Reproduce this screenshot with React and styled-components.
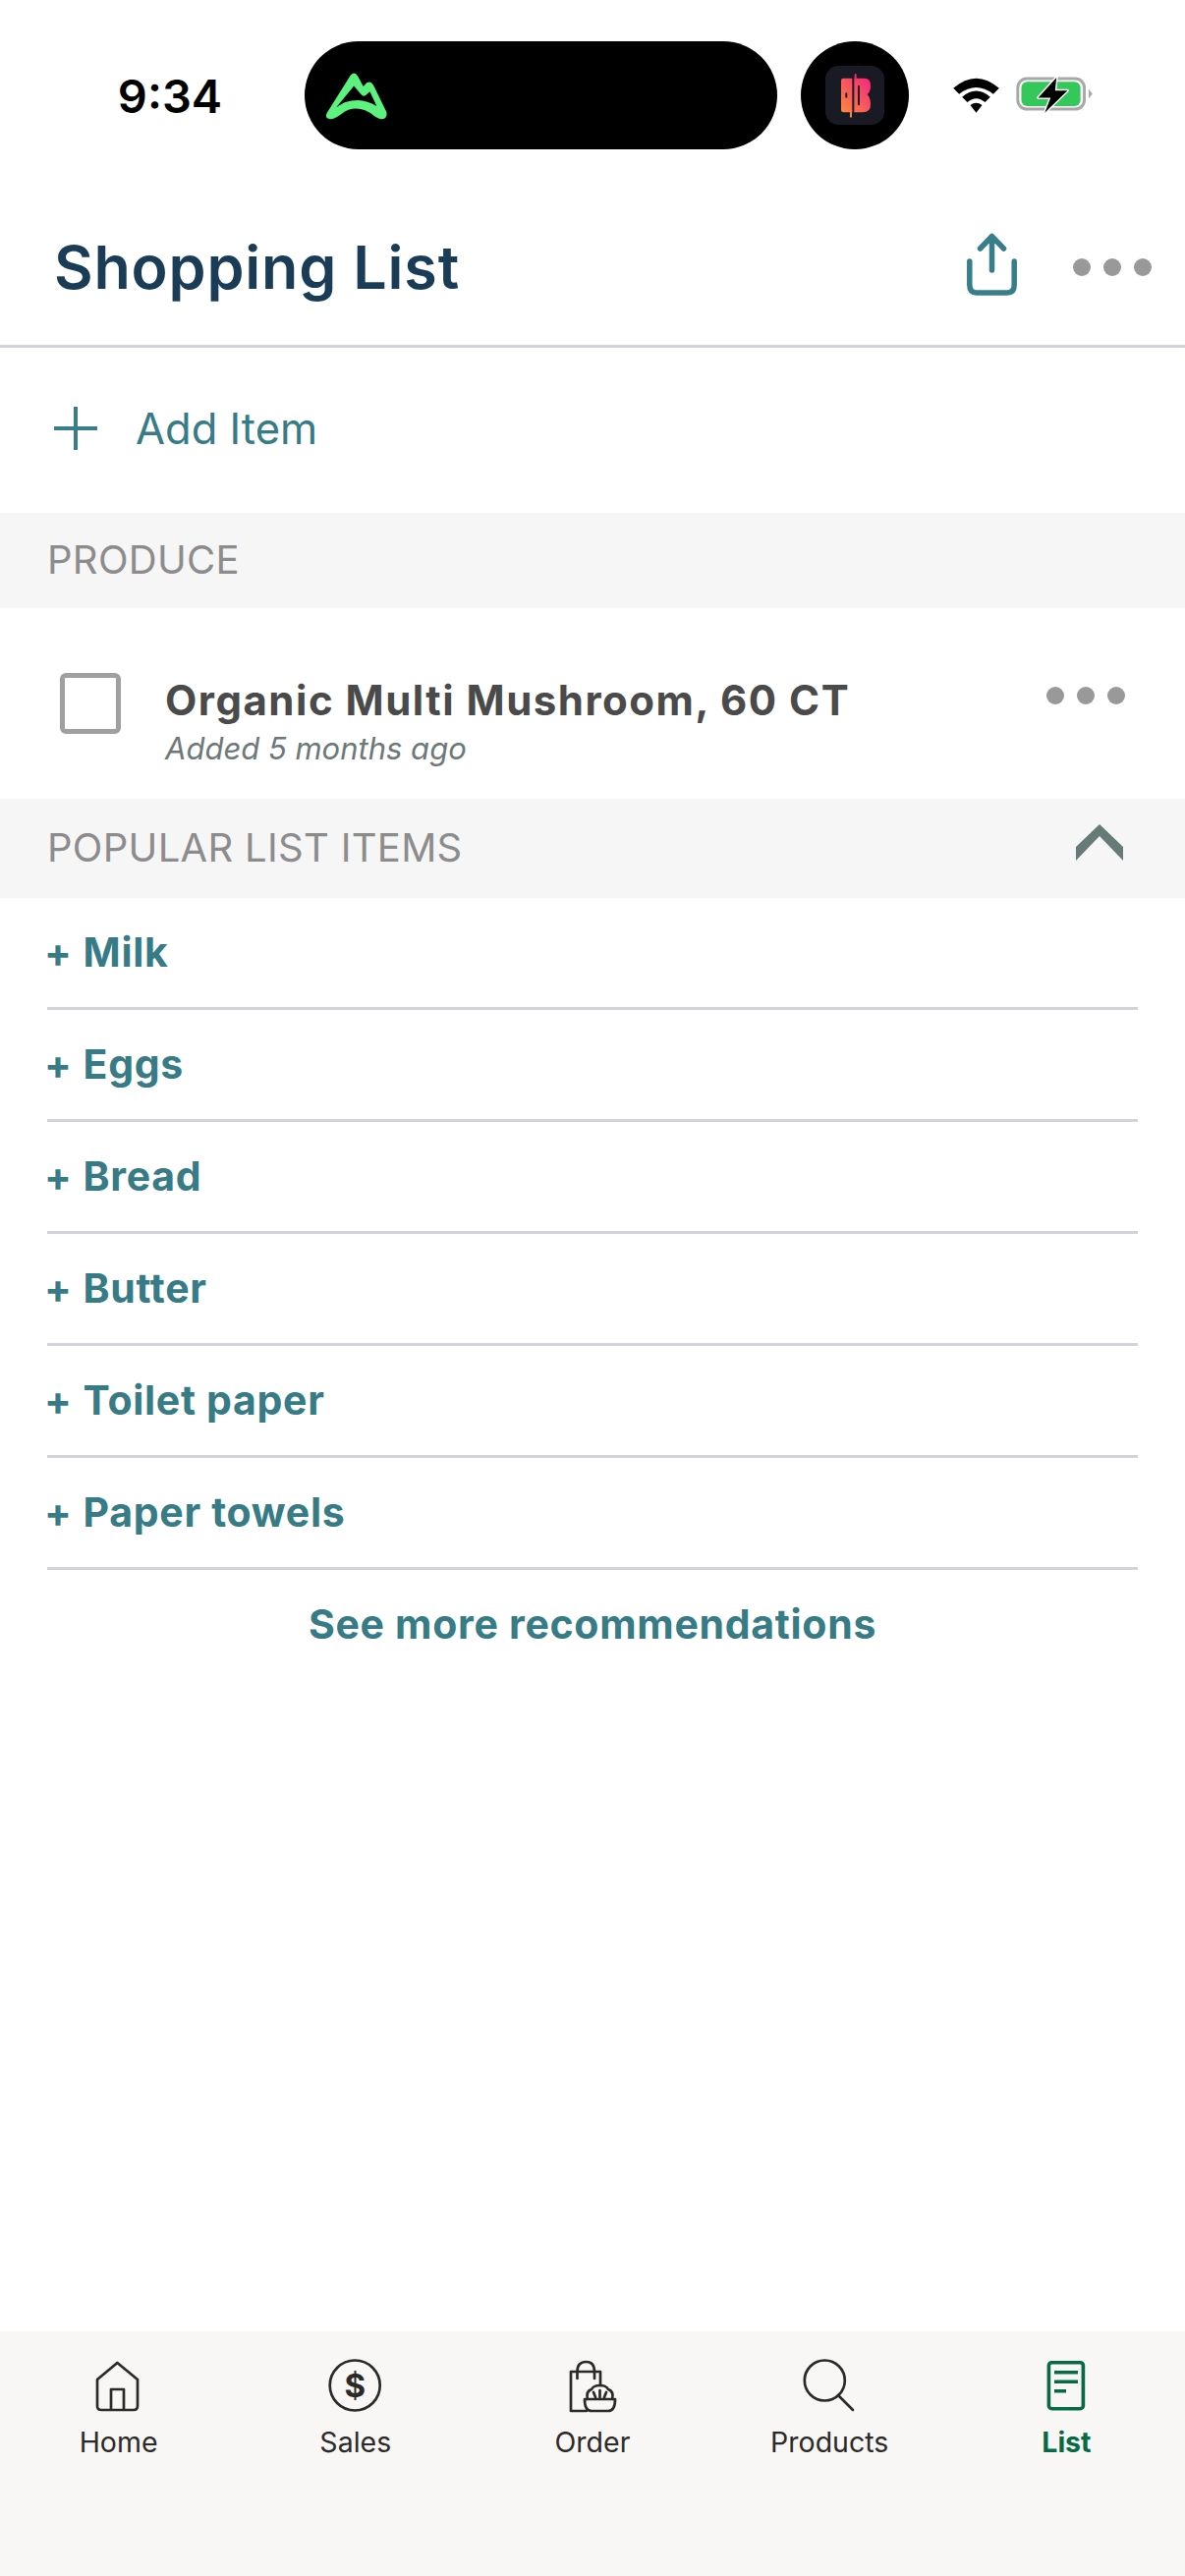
import React from "react";
import styled, { createGlobalStyle } from "styled-components";

const Global = createGlobalStyle`
  html, body { margin: 0; padding: 0; background: #fff; }
  * { box-sizing: border-box; }
`;
const Page = styled.div`
  width: 1206px; height: 2622px; display: flex; flex-direction: column;
  font-family: Inter, "Noto Sans", sans-serif; background: #fff; overflow: hidden;
`;
const StatusBar = styled.div`
  height: 192px; padding-top: 42px; display: flex; align-items: flex-start; flex: none;
`;
const Time = styled.div`
  width: 310px; height: 110px; display: flex; align-items: center; justify-content: center;
  padding-left: 36px; font: 600 47px Inter, sans-serif; color: #000;
`;
const Island = styled.div`
  width: 481px; height: 110px; border-radius: 55px; background: #000;
  display: flex; align-items: center; padding-left: 21px;
`;
const Dot = styled.div`
  width: 110px; height: 110px; border-radius: 50%; background: #000; margin-left: 24px;
  display: flex; align-items: center; justify-content: center;
`;
const Glyphs = styled.div`
  height: 110px; display: flex; align-items: center; margin-left: 45px; gap: 17px;
`;
const Header = styled.header`
  height: 162px; flex: none; border-bottom: 3px solid #d3d1da; display: flex; align-items: center;
  padding: 0 34px 0 55px;
`;
const Title = styled.h1`
  margin: 0; flex: 1; font: 600 61px Inter, sans-serif; color: #1a3c57; letter-spacing: 0.8px;
`;
const HeaderActions = styled.div`
  display: flex; align-items: center; gap: 57px;
`;
const ShareIcon = styled.svg`
  margin-bottom: 6px; display: block;
`;
const Dots = styled.div`
  display: flex; gap: 13px;
  i { width: 18px; height: 18px; border-radius: 50%; background: #999; display: block; }
`;
const AddRow = styled.div`
  height: 168px; flex: none; display: flex; align-items: center; padding: 0 0 4px 55px; gap: 39px;
  font: 400 43.5px Inter, sans-serif; color: #367b85;
`;
const Section = styled.div`
  height: ${p => p.$h}px; flex: none; background: #f6f6f6; display: flex; align-items: center; justify-content: space-between;
  padding: 0 63px 3px 48px; font: 400 40px Inter, sans-serif; color: #8c8c8c; letter-spacing: 0.3px;
`;
const Chevron = styled.svg`
  margin-bottom: 10px; display: block;
`;
const Item = styled.div`
  height: 194px; flex: none; display: flex; padding: 0 61px; align-items: flex-start;
`;
const Check = styled.div`
  width: 62px; height: 62px; margin-top: 66px; border: 5px solid #a0a0a0; border-radius: 6px; flex: none;
`;
const ItemText = styled.div`
  flex: 1; padding: 69px 0 0 45px;
`;
const ItemName = styled.div`
  font: 700 42px/50px Inter, sans-serif; color: #4a4a4a; letter-spacing: 1.5px; white-space: nowrap;
`;
const ItemSub = styled.div`
  font: italic 400 31px/40px Inter, sans-serif; color: #6d7878; margin-top: 4px;
`;
const ItemDots = styled(Dots)`
  margin-top: 80px;
`;
const Popular = styled.div`
  padding: 0 48px; flex: none;
`;
const PopularRow = styled.div`
  height: 114px; border-bottom: 3px solid #d3d1da; display: flex; align-items: center; padding-bottom: 2px;
  font: 700 41px Inter, sans-serif; color: #367b85; white-space: pre; letter-spacing: 0.7px;
`;
const Plus = styled.span`
  margin: 0 11px 0 -3px;
`;
const SeeMore = styled.div`
  height: 114px; display: flex; align-items: center; justify-content: center; padding-bottom: 4px;
  font: 700 41px Inter, sans-serif; color: #367b85; letter-spacing: 0.7px;
`;
const Spacer = styled.div` flex: 1; `;
const TabBar = styled.nav`
  height: 249px; flex: none; background: #f8f7f5; display: grid; grid-template-columns: repeat(5, 1fr);
  padding: 28px 0 0 0; align-items: start;
`;
const Tab = styled.div`
  display: flex; flex-direction: column; align-items: center; gap: 11px;
  font: ${p => (p.$active ? 700 : 400)} 28.5px/36px Inter, sans-serif;
  color: ${p => (p.$active ? "#066a46" : "#2b2a28")};
`;

const TabIcon = ({ children, stroke = "#2b2a28", strokeWidth = 2.7 }) => (
  <svg fill="none" stroke={stroke} strokeWidth={strokeWidth} strokeLinecap="round" strokeLinejoin="round" width="60" height="56" viewBox="0 0 60 56">{children}</svg>
);

const items = ["Milk", "Eggs", "Bread", "Butter", "Toilet paper", "Paper towels"];

export default function App() {
  return (
    <Page>
      <Global />
      <StatusBar>
        <Time>9:34</Time>
        <Island>
          <svg width="63" height="49" viewBox="90 127 190 147">
            <path fillRule="evenodd" fill="#5df27e" d="M96 252 L168 137 Q180 124 190 140 L207 172 L218 160 Q230 154 238 168 L278 250 Q282 272 262 272 Q256 272 240 262 Q212 240 185 240 Q160 240 140 256 Q118 272 106 272 Q86 270 96 252 Z M124 236 Q145 222 152 220 Q170 214 190 214 Q220 216 248 232 L227 188 L213 200 Q205 203 200 196 L178 170 Z" />
          </svg>
        </Island>
        <Dot>
          <svg width="60" height="60" viewBox="120 110 180 180">
            <defs>
              <linearGradient id="bk" x1="1" y1="0" x2="0" y2="1">
                <stop offset="0" stopColor="#f7247d" />
                <stop offset="1" stopColor="#fa8a3f" />
              </linearGradient>
            </defs>
            <rect x="120" y="110" width="180" height="180" rx="40" fill="#1a1a24" />
            <path d="M175 148 H240 Q258 148 258 170 Q258 190 248 197 Q258 207 258 228 Q258 252 235 252 H175 Q168 252 168 245 V155 Q168 148 175 148 Z" fill="url(#bk)" />
            <path d="M205 140 V258 M222 172 V228 M184 195 V205" stroke="#1a1a24" strokeWidth="6" strokeLinecap="round" fill="none" />
            <path d="M212 137 V150 M198 252 V265" stroke="url(#bk)" strokeWidth="6" strokeLinecap="round" fill="none" />
          </svg>
        </Dot>
        <Glyphs>
          <svg width="47" height="36" viewBox="510 148 140 108">
            <path fill="#000" d="M510 180 Q580 120 650 180 L632 198 Q580 158 528 198 Z M537 207 Q580 170 623 207 L607 223 Q580 200 553 223 Z M562 232 Q580 218 598 232 L580 255 Z" />
          </svg>
          <svg width="78" height="38" viewBox="702 147 235 115">
            <rect x="707" y="153" width="205" height="94" rx="28" fill="none" stroke="#a8a8a8" strokeWidth="9" />
            <rect x="718" y="163" width="182" height="75" rx="18" fill="#34c759" />
            <path d="M925 185 L937 200 L925 215 Z" fill="#a8a8a8" />
            <path d="M826 150 L770 212 H808 L790 258 L860 190 H822 Z" fill="#000" stroke="#fff" strokeWidth="9" paintOrder="stroke" strokeLinejoin="round" />
          </svg>
        </Glyphs>
      </StatusBar>
      <Header>
        <Title>Shopping List</Title>
        <HeaderActions>
          <ShareIcon width="51" height="64" viewBox="0 0 51 64" fill="none" stroke="#387d8a" strokeWidth="5.5" strokeLinecap="round" strokeLinejoin="round">
            <path d="M2.8 29 V53 Q2.8 61 10 61 H41 Q48.2 61 48.2 53 V29 M25.5 38 V3.5 M13.5 16 L25.5 3.5 L37.5 16" />
          </ShareIcon>
          <Dots><i /><i /><i /></Dots>
        </HeaderActions>
      </Header>
      <AddRow>
        <svg width="44" height="44" viewBox="0 0 44 44" stroke="#387d8a" strokeWidth="4">
          <path d="M22 0 V44 M0 22 H44" />
        </svg>
        Add Item
      </AddRow>
      <Section $h={97}>PRODUCE</Section>
      <Item>
        <Check />
        <ItemText>
          <ItemName>Organic Multi Mushroom, 60 CT</ItemName>
          <ItemSub>Added 5 months ago</ItemSub>
        </ItemText>
        <ItemDots><i /><i /><i /></ItemDots>
      </Item>
      <Section $h={101}>
        POPULAR LIST ITEMS
        <Chevron width="48" height="37" viewBox="0 0 48 37">
          <path d="M24 0 L48 23 V37 L24 12 L0 37 V23 Z" fill="#667b78" />
        </Chevron>
      </Section>
      <Popular>
        {items.map(t => <PopularRow key={t}><Plus>+</Plus>{t}</PopularRow>)}
      </Popular>
      <SeeMore>See more recommendations</SeeMore>
      <Spacer />
      <TabBar>
        <Tab>
          <TabIcon>
            <path d="M28.4 4 L49 21 V48 Q49 52 45 52 H12 Q8 52 8 48 V21 Z M22 52 V31 H35 V52" />
          </TabIcon>
          Home
        </Tab>
        <Tab>
          <TabIcon>
            <circle cx="29.2" cy="27" r="25.5" />
            <text x="29.2" y="39" textAnchor="middle" fontFamily="Inter, sans-serif" fontWeight="700" fontSize="33" fill="#2b2a28" stroke="none">$</text>
          </TabIcon>
          Sales
        </Tab>
        <Tab>
          <TabIcon>
            <path d="M38 27 V13 H8 V53 H24 M14.5 20 V13 Q14.5 3 23.5 3 Q32 3 32 13 V20" />
            <path d="M22 41 H53 Q53 53 46 53 H29 Q22 53 22 41 Z M25 41 Q23 33 29 31 Q31 27 37.5 27 Q44 27 46 31 Q52 33 50 41 M37.5 32 V39 M31 34 L33 39 M44 34 L42 39" />
          </TabIcon>
          Order
        </Tab>
        <Tab>
          <TabIcon>
            <circle cx="25.3" cy="22" r="20.5" />
            <path d="M39 37 L54 52" />
          </TabIcon>
          Products
        </Tab>
        <Tab $active>
          <TabIcon stroke="#066a46" strokeWidth="3.6">
            <rect x="12.4" y="3.7" width="35" height="47" rx="3" />
            <path d="M18 12 H42 V15.5 H18 Z M18 21.5 H42 V25 H18 Z M18 31 H30 V34.5 H18 Z" fill="#066a46" stroke="none" />
          </TabIcon>
          List
        </Tab>
      </TabBar>
    </Page>
  );
}
